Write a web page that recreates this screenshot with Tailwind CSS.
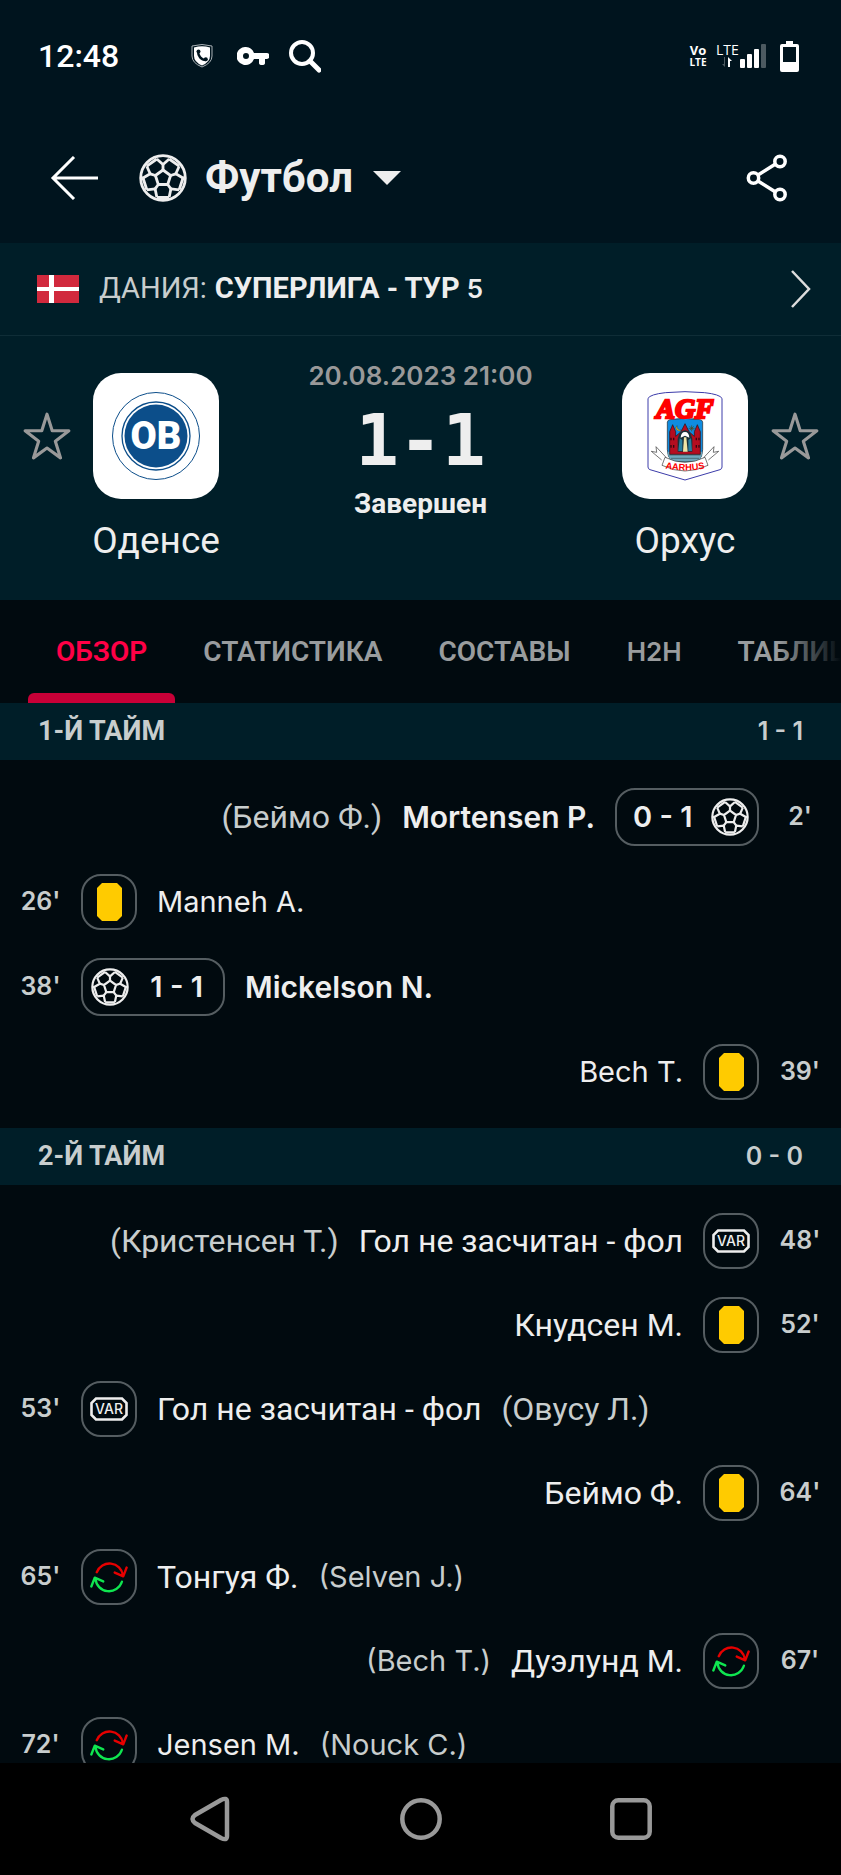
<!DOCTYPE html>
<html lang="ru">

<head>
    <meta charset="UTF-8">
    <meta name="viewport" content="width=device-width, initial-scale=1.0">
    <title>Оденсе - Орхус 1-1</title>
    <script src="https://cdn.jsdelivr.net/npm/@tailwindcss/browser@4"></script>
</head>

<body class="flex flex-col h-screen overflow-hidden bg-[#010a0f] text-[#eeeeee] font-[Roboto,sans-serif]">

    <!-- shared icons -->
    <svg class="hidden">
        <symbol id="ball" viewBox="0 0 48 48">
            <g fill="none" stroke="currentColor" stroke-width="2.8" stroke-linejoin="round">
                <circle cx="24" cy="24" r="22.3" />
                <path d="M24 16l7.6 5.5-2.9 9h-9.4l-2.9-9z" />
                <path d="M24 16v-5.500M31.600 21.500l5.200-1.700M28.700 30.500l3.200 4.400M19.300 30.500l-3.200 4.400M16.400 21.500l-5.200-1.700" />
                <path d="M17.800 5L24 10.500 30.200 5M40.200 12.200L36.800 19.800 44 24M40.200 35.800L31.900 34.900 30.200 43M17.800 43L16.100 34.900 7.800 35.800M4 24L11.200 19.800 7.800 12.200" />
                <path d="M30.200 5l10 7.200M44 24l-3.800 11.800M30.200 43.500H17.800M7.800 35.800L4 24M7.800 12.200l10-7.200M4 24H2M44 24h2" />
            </g>
        </symbol>
        <symbol id="card" viewBox="0 0 25 38">
            <path fill="#ffcb00" d="M5 0h15l5 5v28l-5 5H5l-5-5V5z" />
        </symbol>
        <symbol id="var" viewBox="0 0 38 24">
            <path d="M6 1.500h26L36.500 6v12L32 22.500H6L1.500 18V6z" fill="none" stroke="#eeeeee" stroke-width="2.600" />
            <text x="19" y="17" text-anchor="middle" font-family="Inter, sans-serif" font-size="14" font-weight="500" fill="#eeeeee">VAR</text>
        </symbol>
        <symbol id="sub" viewBox="0 0 112 92">
            <g fill="none" stroke-width="7" stroke-linecap="round" stroke-linejoin="round">
                <path stroke="#e60000" d="M20 32A40 40 0 0 1 97 41M73 33l25 11 10-26" />
                <path stroke="#0fe650" d="M94 60A40 40 0 0 1 16 51M39 59L14 48 4 74" />
            </g>
        </symbol>
        <symbol id="star" viewBox="0 0 48 48">
            <path d="M24 3l5 16h16L32 29l5 16-13-9.500L11 45l5-16L3 19h16z" fill="none" stroke="#999999" stroke-width="3" stroke-linejoin="round" />
        </symbol>
    </svg>

    <!-- status bar -->
    <div class="flex shrink-0 items-center h-28 pl-[38px] pr-[42px] bg-[#00141e] text-white">
        <span class="text-[32px] font-medium mr-[72px]">12:48</span>
        <svg class="w-[22px] h-6 mr-6" viewBox="0 0 22 24">
            <path d="M1 2Q11-1 21 2v10q0 7-10 11Q1 19 1 12z" fill="none" stroke="#aab2b6" stroke-width="1" />
            <path d="M3 3.500Q11 1 19 3.500V12q0 6-8 9.500Q3 18 3 12z" fill="#fff" />
            <path d="M7 7c0 5 3 9 8 9" fill="none" stroke="#00141e" stroke-width="2.400" />
            <circle cx="7.500" cy="7.500" r="2" fill="#00141e" />
            <circle cx="14.800" cy="15.200" r="2" fill="#00141e" />
        </svg>
        <svg class="w-8 h-[18px] mr-5" viewBox="0 0 32 18">
            <path fill="#fff" fill-rule="evenodd" d="M9 0a9 9 0 0 1 8 6h12a3 3 0 0 1 1 6h-2v4q0 2-3 2t-3-2v-4h-5A9 9 0 1 1 9 0zm0 6a3 3 0 1 0 0 6 3 3 0 0 0 0-6z" />
        </svg>
        <svg class="w-8 h-[34px]" viewBox="0 0 32 34" fill="none" stroke="#fff">
            <circle cx="13" cy="14" r="11" stroke-width="4" />
            <path d="M21 22l9 9" stroke-width="5" stroke-linecap="round" />
        </svg>
        <svg class="w-5 h-8 ml-auto mr-2" viewBox="0 0 20 32" fill="#fff" font-family="Open Sans, sans-serif" font-weight="700">
            <text x="10" y="15" text-anchor="middle" font-size="13">Vo</text>
            <text x="10" y="26" text-anchor="middle" font-size="10">LTE</text>
        </svg>
        <svg class="w-[51px] h-8 mr-[13px]" viewBox="0 0 51 32" fill="#fff">
            <text x="0" y="15" font-family="Open Sans, sans-serif" font-size="14">LTE</text>
            <path d="M9 17v10l-3-3h2v-7z" fill="#4c5a61" />
            <path d="M12 27V17l4 4h-2v6z" />
            <rect x="24" y="19" width="5" height="9" rx="1" />
            <rect x="31" y="14" width="5" height="14" rx="1" />
            <rect x="38" y="9" width="5" height="19" rx="1" />
            <rect x="45" y="4" width="5" height="24" rx="1" fill="#4c5a61" />
        </svg>
        <svg class="w-[19px] h-[31px]" viewBox="0 0 19 31">
            <path fill="#fff" fill-rule="evenodd" d="M6 0h7v3h4q2 0 2 2v24q0 2-2 2H2q-2 0-2-2V5q0-2 2-2h4zM3 6v15h13V6z" />
        </svg>
    </div>

    <!-- header -->
    <header class="flex shrink-0 items-center h-[131px] pl-[50px] pr-[54px] bg-[#00141e]">
        <a href="#" aria-label="Назад" class="mr-[41px]">
            <svg class="w-12 h-11" viewBox="0 0 48 44" fill="none" stroke="#fff" stroke-width="3">
                <path d="M48 22H3M24 1L3 22l21 21" />
            </svg>
        </a>
        <button class="flex items-center">
            <svg class="size-12 mr-[18px]"><use href="#ball" /></svg>
            <span class="text-[42px] leading-[48px] font-bold mr-5">Футбол</span>
            <svg class="w-7 h-[14px]" viewBox="0 0 28 14"><path d="M0 0h28L14 14z" fill="#eeeeee" /></svg>
        </button>
        <button aria-label="Поделиться" class="ml-auto">
            <svg class="w-[41px] h-12" viewBox="0 0 41 48" fill="none" stroke="#fff" stroke-width="3.500">
                <circle cx="34" cy="7.500" r="5.200" />
                <circle cx="7.500" cy="24" r="5.200" />
                <circle cx="34" cy="40.500" r="5.200" />
                <path d="M12 21l17.500-11M12 27l17.500 11" />
            </svg>
        </button>
    </header>

    <!-- league -->
    <a href="#" class="flex shrink-0 items-center h-[93px] pl-[37px] pr-[30px] bg-[#001e28] border-b border-[#0f2d37] text-[29px]">
        <svg class="w-[42px] h-7 mr-5" viewBox="0 0 42 28">
            <path fill="#d1293d" d="M0 0h42v28H0z" />
            <path fill="#fff" d="M12 0h5v28h-5zM0 12h42v4H0z" />
        </svg>
        <span class="text-[#c8cdcd] mr-2">ДАНИЯ:</span>
        <span class="font-bold">СУПЕРЛИГА - ТУР <span class="text-[26px] font-semibold font-[Inter,sans-serif]">5</span></span>
        <svg class="w-5 h-[38px] ml-auto" viewBox="0 0 20 38" fill="none" stroke="#dddddd" stroke-width="2.500">
            <path d="M1 1l17 18L1 37" />
        </svg>
    </a>

    <!-- match -->
    <section class="grid shrink-0 grid-cols-[93px_126px_1fr_126px_93px] justify-items-center h-[264px] pt-6 bg-[#001e28]">
        <button aria-label="В избранное" class="self-start mt-[51px]">
            <svg class="size-[50px]"><use href="#star" /></svg>
        </button>
        <div class="flex flex-col items-center mt-[13px]">
            <div class="flex items-center justify-center size-[126px] rounded-[28px] bg-white">
                <svg class="size-[90px]" viewBox="0 0 90 90">
                    <g fill="none" stroke="#0c4e8a">
                        <circle cx="45" cy="45" r="43.500" />
                        <circle cx="45" cy="45" r="34" stroke-width="1.300" />
                    </g>
                    <circle cx="45" cy="45" r="31.500" fill="#0c4e8a" />
                    <text x="45" y="58" text-anchor="middle" font-family="Roboto, sans-serif" font-weight="900" font-size="38" fill="#fff">OB</text>
                </svg>
            </div>
            <h2 class="mt-5 text-[37px] leading-[44px]">Оденсе</h2>
        </div>
        <div class="flex flex-col items-center">
            <span class="text-[26px] leading-8 font-semibold text-[#999999] font-[Inter,sans-serif]">20.08.2023 21:00</span>
            <span class="mt-3 text-[72px] leading-[72px] font-bold font-[DejaVu_Sans_Mono,monospace]">1-1</span>
            <span class="mt-3 text-[28px] leading-8 font-bold">Завершен</span>
        </div>
        <div class="flex flex-col items-center mt-[13px]">
            <div class="flex items-center justify-center size-[126px] rounded-[28px] bg-white">
                <svg class="w-[76px] h-[90px]" viewBox="0 0 228 270">
                    <path d="M3 22Q10 10 55 5 114-1 173 5 218 10 225 22V228q0 6-6 8L114 267 9 236q-6-2-6-8z" fill="#fff" stroke="#3c3caa" stroke-width="3" />
                    <path d="M61 94q0-6 7-8 46-8 92 0 7 2 7 8v82q0 45-53 45t-53-45z" fill="#0f8ce0" stroke="#222" stroke-width="2" />
                    <path d="M62 182h104q-3 39-52 39t-52-39z" fill="#6fa9bd" />
                    <path d="M67 192h94M72 202h84M82 212h64" stroke="#35515c" stroke-width="2" />
                    <path d="M68 190v-68l9-21 9 21v14l16-14 12-24 12 24 16 14v-14l9-21 9 21v68z" fill="#b50d20" stroke="#241014" stroke-width="2" />
                    <path d="M92 182v-38q4-24 22-26 18 2 22 26v38z" fill="#1b3039" />
                    <path d="M101 140q1-17 13-17t13 17l-13-6z" fill="#fff" />
                    <path d="M108 182l3-43h7l4 43z" fill="#f1e5a7" />
                    <path d="M94 180l4-38 8 5v33zM124 180v-33l8-5 3 38z" fill="#267da0" />
                    <path d="M72 140v8M80 140v8M72 162v8M80 162v8M148 140v8M156 140v8M148 162v8M156 162v8" stroke="#320810" stroke-width="4" />
                    <path d="M90 104a9 9 0 1 0 13 13 11 11 0 0 1-13-13z" fill="#e6c325" stroke="#222" />
                    <path d="M134 103v18M125 112h18M128 106l12 12M140 106l-12 12" stroke="#4d4514" stroke-width="2" />
                    <path d="M44 207L13 181l16 3-2-17 31 33M184 207l31-26-16 3 2-17-31 33" fill="#fff" stroke="#333" stroke-width="2" />
                    <path d="M54 199q60 30 120 0l9 24q-69 34-138 0z" fill="#fff" stroke="#333" stroke-width="2" />
                    <path id="ribbon" d="M44 230q70 16 140 0" fill="none" />
                    <text font-family="Liberation Sans, sans-serif" font-weight="700" font-size="28" fill="#ff0000" text-anchor="middle"><textPath href="#ribbon" startOffset="50%">AARHUS</textPath></text>
                    <text x="114" y="80" text-anchor="middle" font-family="Liberation Serif, serif" font-weight="700" font-style="italic" font-size="84" fill="#ff0000" stroke="#ff0000" stroke-width="7">AGF</text>
                </svg>
            </div>
            <h2 class="mt-5 text-[37px] leading-[44px]">Орхус</h2>
        </div>
        <button aria-label="В избранное" class="self-start mt-[51px]">
            <svg class="size-[50px]"><use href="#star" /></svg>
        </button>
    </section>

    <!-- tabs -->
    <nav class="relative flex shrink-0 h-[103px] pl-7 overflow-hidden text-[28px] font-semibold text-[#999c9e] whitespace-nowrap">
        <button class="relative shrink-0 px-7 text-[#ff0046]">ОБЗОР
            <span class="absolute inset-x-0 bottom-0 h-[10px] rounded-t-md bg-[#c80037]"></span>
        </button>
        <button class="shrink-0 px-7">СТАТИСТИКА</button>
        <button class="shrink-0 px-7">СОСТАВЫ</button>
        <button class="shrink-0 px-7 text-[26px] font-[Inter,sans-serif]">H2H</button>
        <button class="shrink-0 px-7">ТАБЛИЦА</button>
        <div class="absolute inset-y-0 right-0 w-16 bg-linear-to-r from-transparent to-[#010a0f]"></div>
    </nav>

    <!-- events -->
    <main class="flex-1 min-h-0 overflow-hidden">
        <div class="flex items-center justify-between h-[57px] px-[38px] bg-[#001e28] text-[#c8cdcd]">
            <h3 class="text-[27px] font-bold">1-Й ТАЙМ</h3>
            <span class="text-[25px] font-semibold font-[Inter,sans-serif]">1 - 1</span>
        </div>
        <ul class="py-[14px] text-[32px]">
            <li class="flex flex-row-reverse items-center py-[14px]">
                <span class="w-[82px] text-center text-[25px] font-semibold text-[#c8cdcd] font-[Inter,sans-serif]">2'</span>
                <span class="flex items-center justify-between w-36 h-[58px] pl-4 pr-2 border-2 border-[#555d61] rounded-[20px] text-[29px] font-semibold font-[Inter,sans-serif]">0 - 1
                    <svg class="size-[38px]"><use href="#ball" /></svg>
                </span>
                <span class="mr-5 text-[30px] font-semibold font-[Inter,sans-serif]">Mortensen P.</span>
                <span class="mr-5 text-[#c8cdcd]">(Беймо Ф.)</span>
            </li>
            <li class="flex items-center py-[14px]">
                <span class="w-[81px] text-center text-[25px] font-semibold text-[#c8cdcd] font-[Inter,sans-serif]">26'</span>
                <span class="flex items-center justify-center size-14 border-2 border-[#555d61] rounded-[20px]">
                    <svg class="w-[25px] h-[38px]"><use href="#card" /></svg>
                </span>
                <span class="ml-5 text-[29px] font-[Inter,sans-serif]">Manneh A.</span>
            </li>
            <li class="flex items-center py-[14px]">
                <span class="w-[81px] text-center text-[25px] font-semibold text-[#c8cdcd] font-[Inter,sans-serif]">38'</span>
                <span class="flex items-center justify-between w-36 h-[58px] pl-2 pr-5 border-2 border-[#555d61] rounded-[20px] text-[29px] font-semibold font-[Inter,sans-serif]">
                    <svg class="size-[38px]"><use href="#ball" /></svg>
                    1 - 1
                </span>
                <span class="ml-5 text-[30px] font-semibold font-[Inter,sans-serif]">Mickelson N.</span>
            </li>
            <li class="flex flex-row-reverse items-center py-[14px]">
                <span class="w-[82px] text-center text-[25px] font-semibold text-[#c8cdcd] font-[Inter,sans-serif]">39'</span>
                <span class="flex items-center justify-center size-14 border-2 border-[#555d61] rounded-[20px]">
                    <svg class="w-[25px] h-[38px]"><use href="#card" /></svg>
                </span>
                <span class="mr-5 text-[29px] font-[Inter,sans-serif]">Bech T.</span>
            </li>
        </ul>

        <div class="flex items-center justify-between h-[57px] px-[38px] bg-[#001e28] text-[#c8cdcd]">
            <h3 class="text-[27px] font-bold">2-Й ТАЙМ</h3>
            <span class="text-[25px] font-semibold font-[Inter,sans-serif]">0 - 0</span>
        </div>
        <ul class="py-[14px] text-[32px]">
            <li class="flex flex-row-reverse items-center py-[14px]">
                <span class="w-[82px] text-center text-[25px] font-semibold text-[#c8cdcd] font-[Inter,sans-serif]">48'</span>
                <span class="flex items-center justify-center size-14 border-2 border-[#555d61] rounded-[20px]">
                    <svg class="w-[38px] h-6"><use href="#var" /></svg>
                </span>
                <span class="mr-5">Гол не засчитан - фол</span>
                <span class="mr-5 text-[#c8cdcd]">(Кристенсен Т.)</span>
            </li>
            <li class="flex flex-row-reverse items-center py-[14px]">
                <span class="w-[82px] text-center text-[25px] font-semibold text-[#c8cdcd] font-[Inter,sans-serif]">52'</span>
                <span class="flex items-center justify-center size-14 border-2 border-[#555d61] rounded-[20px]">
                    <svg class="w-[25px] h-[38px]"><use href="#card" /></svg>
                </span>
                <span class="mr-5">Кнудсен М.</span>
            </li>
            <li class="flex items-center py-[14px]">
                <span class="w-[81px] text-center text-[25px] font-semibold text-[#c8cdcd] font-[Inter,sans-serif]">53'</span>
                <span class="flex items-center justify-center size-14 border-2 border-[#555d61] rounded-[20px]">
                    <svg class="w-[38px] h-6"><use href="#var" /></svg>
                </span>
                <span class="ml-5">Гол не засчитан - фол</span>
                <span class="ml-5 text-[#c8cdcd]">(Овусу Л.)</span>
            </li>
            <li class="flex flex-row-reverse items-center py-[14px]">
                <span class="w-[82px] text-center text-[25px] font-semibold text-[#c8cdcd] font-[Inter,sans-serif]">64'</span>
                <span class="flex items-center justify-center size-14 border-2 border-[#555d61] rounded-[20px]">
                    <svg class="w-[25px] h-[38px]"><use href="#card" /></svg>
                </span>
                <span class="mr-5">Беймо Ф.</span>
            </li>
            <li class="flex items-center py-[14px]">
                <span class="w-[81px] text-center text-[25px] font-semibold text-[#c8cdcd] font-[Inter,sans-serif]">65'</span>
                <span class="flex items-center justify-center size-14 border-2 border-[#555d61] rounded-[20px]">
                    <svg class="w-[38px] h-8"><use href="#sub" /></svg>
                </span>
                <span class="ml-5">Тонгуя Ф.</span>
                <span class="ml-5 text-[29px] text-[#c8cdcd] font-[Inter,sans-serif]">(Selven J.)</span>
            </li>
            <li class="flex flex-row-reverse items-center py-[14px]">
                <span class="w-[82px] text-center text-[25px] font-semibold text-[#c8cdcd] font-[Inter,sans-serif]">67'</span>
                <span class="flex items-center justify-center size-14 border-2 border-[#555d61] rounded-[20px]">
                    <svg class="w-[38px] h-8"><use href="#sub" /></svg>
                </span>
                <span class="mr-5">Дуэлунд М.</span>
                <span class="mr-5 text-[29px] text-[#c8cdcd] font-[Inter,sans-serif]">(Bech T.)</span>
            </li>
            <li class="flex items-center py-[14px]">
                <span class="w-[81px] text-center text-[25px] font-semibold text-[#c8cdcd] font-[Inter,sans-serif]">72'</span>
                <span class="flex items-center justify-center size-14 border-2 border-[#555d61] rounded-[20px]">
                    <svg class="w-[38px] h-8"><use href="#sub" /></svg>
                </span>
                <span class="ml-5 text-[29px] font-[Inter,sans-serif]">Jensen M.</span>
                <span class="ml-5 text-[29px] text-[#c8cdcd] font-[Inter,sans-serif]">(Nouck C.)</span>
            </li>
        </ul>
    </main>

    <!-- system navigation -->
    <footer class="grid shrink-0 grid-cols-3 place-items-center h-28 px-[12.5%] bg-black">
        <button aria-label="Назад">
            <svg class="w-[42px] h-[46px]" viewBox="0 0 42 46" fill="none" stroke="#999999" stroke-width="4.500" stroke-linejoin="round">
                <path d="M32 4Q38 1 38 6v34q0 5-6 2L6 27q-5-4 0-8z" />
            </svg>
        </button>
        <button aria-label="Домой">
            <svg class="size-[42px]" viewBox="0 0 42 42" fill="none" stroke="#999999" stroke-width="4.500"><circle cx="21" cy="21" r="18.700" /></svg>
        </button>
        <button aria-label="Недавние">
            <svg class="size-[42px]" viewBox="0 0 42 42" fill="none" stroke="#999999" stroke-width="4.500"><rect x="2.300" y="2.300" width="37.400" height="37.400" rx="6" /></svg>
        </button>
    </footer>
</body>

</html>
